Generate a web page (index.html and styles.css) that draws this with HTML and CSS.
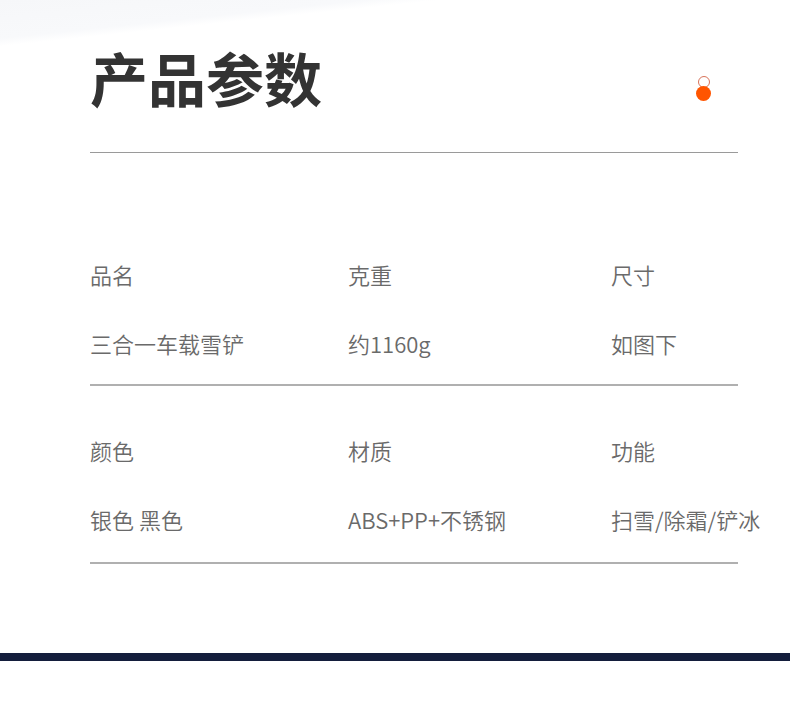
FILE: index.html
```html
<!DOCTYPE html>
<html lang="zh-CN">
<head>
    <meta charset="UTF-8">
    <meta name="viewport" content="width=device-width, initial-scale=1.0">
    <title>产品参数</title>
    <link rel="stylesheet" href="styles.css">
</head>
<body>
    <div class="page">
        <header class="head">
            <h1 class="title">产品参数</h1>
            <span class="dots">
                <span class="dot-ring"></span>
                <span class="dot-fill"></span>
            </span>
        </header>

        <div class="params">
            <div class="row first">
                <div class="cell">
                    <div class="label">品名</div>
                    <div class="value">三合一车载雪铲</div>
                </div>
                <div class="cell">
                    <div class="label">克重</div>
                    <div class="value">约1160g</div>
                </div>
                <div class="cell">
                    <div class="label">尺寸</div>
                    <div class="value">如图下</div>
                </div>
            </div>
            <div class="row">
                <div class="cell">
                    <div class="label">颜色</div>
                    <div class="value">银色 黑色</div>
                </div>
                <div class="cell">
                    <div class="label">材质</div>
                    <div class="value">ABS+PP+不锈钢</div>
                </div>
                <div class="cell">
                    <div class="label">功能</div>
                    <div class="value">扫雪/除霜/铲冰</div>
                </div>
            </div>
        </div>
    </div>
    <div class="footer-bar"></div>
</body>
</html>
```

FILE: styles.css
```css
body {
    margin: 0;
    background-color: #fff;
    font-family: "Noto Sans CJK SC", "Noto Sans", sans-serif;
    color: #333;
}

.page {
    padding: 0 52px 89px 90px;
    background: linear-gradient(174deg, #f6f7f9 0, #f8f9fb 38px, #fff 46px);
    background-repeat: no-repeat;
    background-size: 620px 60px;
}

.head {
    display: flex;
    align-items: center;
    justify-content: space-between;
    padding-top: 46px;
    padding-bottom: 44px;
    border-bottom: 1px solid #9a9a9a;
}

.title {
    margin: 0;
    font-size: 58px;
    line-height: 62px;
    font-weight: bold;
    color: #333;
}

.dots {
    display: flex;
    flex-direction: column;
    align-items: center;
    margin-right: 27px;
    margin-top: 22px;
}

.dot-ring {
    width: 10px;
    height: 10px;
    border: 1px solid #d8735a;
    border-radius: 50%;
}

.dot-fill {
    width: 15px;
    height: 15px;
    margin-top: -2px;
    border-radius: 50%;
    background-color: #ff5500;
}

.params {
    padding-top: 57px;
}

.row {
    display: grid;
    grid-template-columns: 258px 263px 1fr;
    padding: 52px 0 29px;
    border-bottom: 2px solid #b0b0b0;
}

.row + .row {
    padding-bottom: 31px;
}

.label,
.value {
    font-size: 22px;
    line-height: 24px;
    font-weight: 350;
    color: #6a6a6a;
    white-space: nowrap;
}

.label {
    margin-bottom: 45px;
}

.footer-bar {
    height: 8px;
    background-color: #141e3c;
    margin-bottom: 65px;
}
```
